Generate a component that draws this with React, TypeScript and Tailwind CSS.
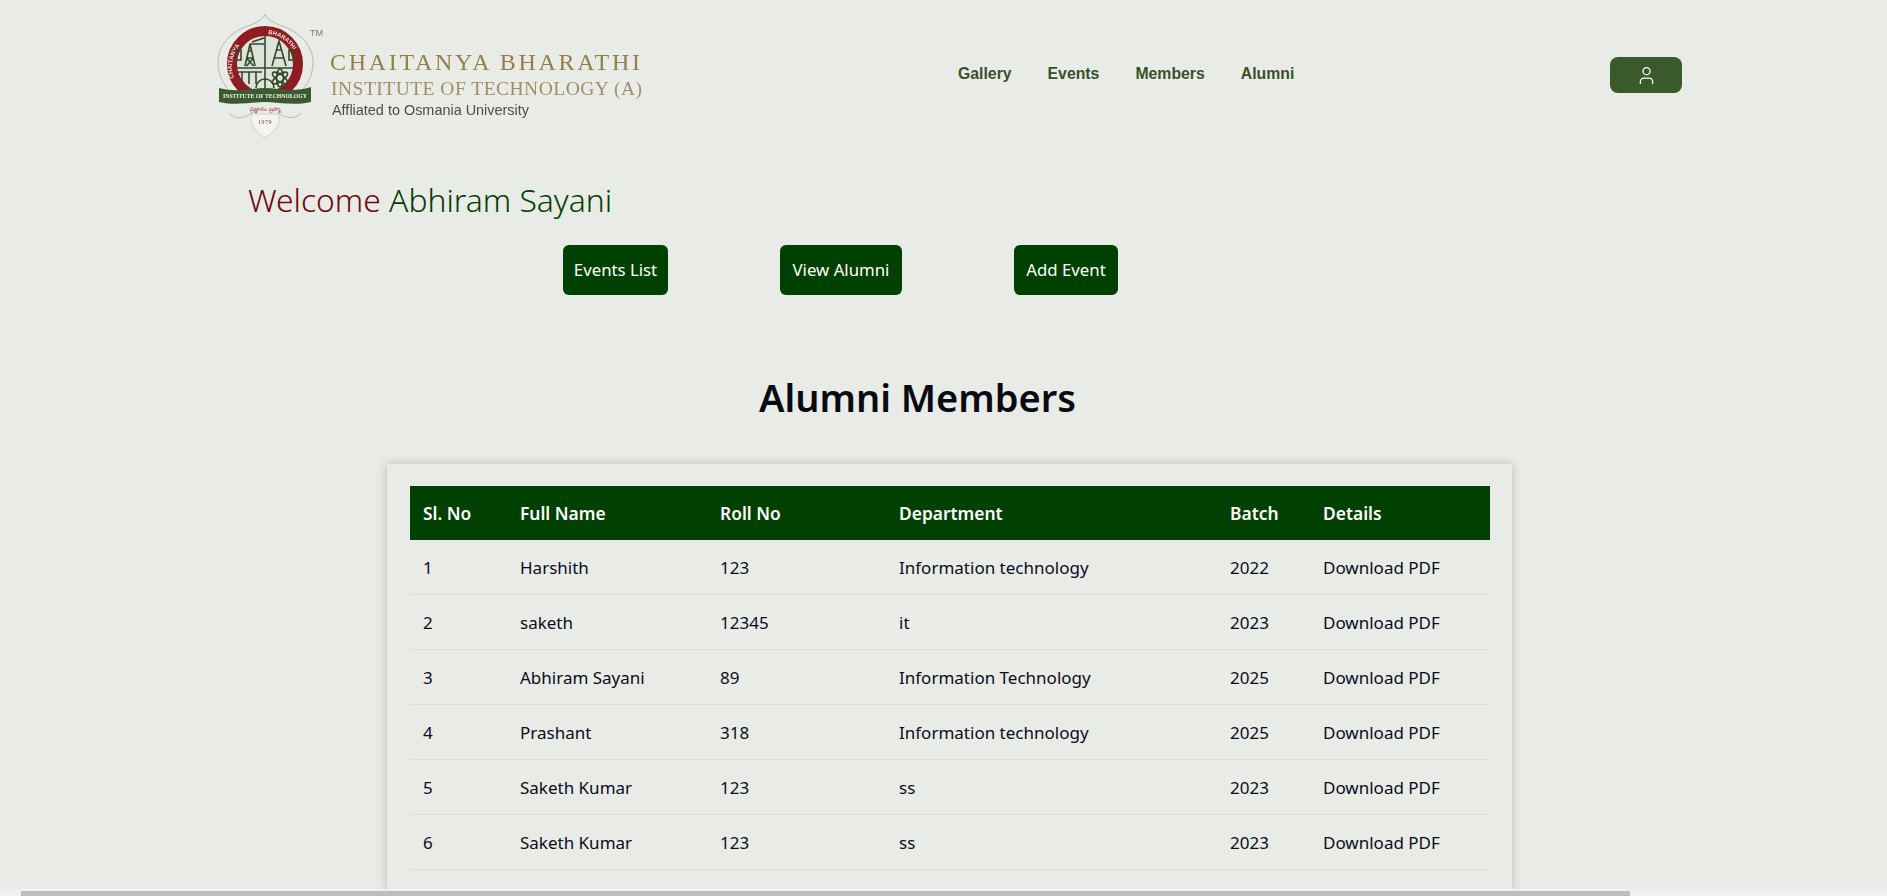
import React from 'react';
import { User } from 'lucide-react';

const alumni = [
  { id: 1, name: 'Harshith', roll: '123', dept: 'Information technology', batch: '2022' },
  { id: 2, name: 'saketh', roll: '12345', dept: 'it', batch: '2023' },
  { id: 3, name: 'Abhiram Sayani', roll: '89', dept: 'Information Technology', batch: '2025' },
  { id: 4, name: 'Prashant', roll: '318', dept: 'Information technology', batch: '2025' },
  { id: 5, name: 'Saketh Kumar', roll: '123', dept: 'ss', batch: '2023' },
  { id: 6, name: 'Saketh Kumar', roll: '123', dept: 'ss', batch: '2023' },
];

const Logo = () => (
  <svg viewBox="0 0 430 130" className="h-[130px] w-[430px] blur-[0.3px]">
    <defs>
      <path id="arcLeft" d="M18 68 A33 33 0 0 1 46 24" />
      <path id="arcRight" d="M52 24 A33 33 0 0 1 80 68" />
    </defs>
    {/* outer petal outline */}
    <path d="M49 4 C47 10 40 13 32 16 C14 22 2 36 2 52 C2 64 6 72 12 79" fill="none" stroke="#a9ada6" strokeWidth="0.8" />
    <path d="M49 4 C51 10 58 13 66 16 C84 22 97 36 97 52 C97 64 93 72 87 79" fill="none" stroke="#a9ada6" strokeWidth="0.8" />
    {/* ring */}
    <circle cx="49" cy="54" r="33" fill="#dfe2da" stroke="#8e1c22" strokeWidth="10" />
    <text fontSize="6" fontFamily="'Liberation Sans', sans-serif" fontWeight="700" fill="#efe6da">
      <textPath href="#arcLeft">CHAITANYA</textPath>
    </text>
    <text fontSize="6" fontFamily="'Liberation Sans', sans-serif" fontWeight="700" fill="#efe6da">
      <textPath href="#arcRight">BHARATHI</textPath>
    </text>
    {/* crest line art */}
    <g fill="none" stroke="#2f4a28" strokeWidth="1.6">
      <path d="M21 58 H77 M49 26 V78" />
      <path d="M29 56 L34 34 L39 56 M30.5 48 H37.5 M32 41 H36 M30.5 48 L37.5 56 M37.5 48 L30.5 56" />
      <path d="M36 32 L48 28 M34 34 L48 34" />
      <path d="M56 56 L63 31 L70 56 M58 48 H68 M60 40 H66" />
      <ellipse cx="64" cy="68" rx="9" ry="3.4" transform="rotate(35 64 68)" />
      <ellipse cx="64" cy="68" rx="9" ry="3.4" transform="rotate(-35 64 68)" />
      <ellipse cx="64" cy="68" rx="3.4" ry="9" />
      <path d="M22 62 H46 M26 62 V72 M33 62 V74 M40 62 V74" />
      <path d="M20 40 V50 H25 V40 Z M73 40 V50 H78 V40 Z" />
      <path d="M40 78 A9 9 0 0 1 58 78" />
    </g>
    {/* banner */}
    <path d="M3 78 C22 83 36 78 49 78 C62 78 76 83 95 77 L95 92 C78 96 62 92 49 92 C36 92 20 96 3 92 Z" fill="#3b5a2f" />
    <text x="49" y="87.5" textAnchor="middle" fontSize="5.6" textLength="84" lengthAdjust="spacingAndGlyphs" fontFamily="'Liberation Serif', serif" fontWeight="700" fill="#f1f1e8">
      INSTITUTE OF TECHNOLOGY
    </text>
    {/* lower shield */}
    <path d="M13 103 C20 111 30 107 36 103 M85 103 C78 111 68 107 62 103" fill="none" stroke="#a9ada6" strokeWidth="0.8" />
    <path d="M36 104 H62 C66 114 58 122 49 128 C40 122 32 114 36 104 Z" fill="#f4f4f0" stroke="#c2c4bd" strokeWidth="0.7" />
    <text x="49" y="101" textAnchor="middle" fontSize="5.5" fontFamily="'Noto Sans', sans-serif" fill="#9c2a33">
      ప్రజ్ఞానం బ్రహ్మ
    </text>
    <text x="49" y="114" textAnchor="middle" fontSize="6" letterSpacing="0.5" fontFamily="'Liberation Serif', serif" fill="#8c3038">
      1979
    </text>
    <text x="94" y="26" fontSize="9" fontFamily="'Liberation Sans', sans-serif" fill="#777b75">TM</text>
    {/* wordmark */}
    <text x="114" y="60" fontSize="24" textLength="310" lengthAdjust="spacing" fontFamily="'Liberation Serif', serif" fill="#947e48">
      CHAITANYA BHARATHI
    </text>
    <text x="115" y="85" fontSize="19.5" textLength="311" lengthAdjust="spacing" fontFamily="'Liberation Serif', serif" fill="#a08f66">
      INSTITUTE OF TECHNOLOGY (A)
    </text>
    <text x="116" y="105" fontSize="14.5" textLength="197" lengthAdjust="spacingAndGlyphs" fontFamily="'Liberation Sans', sans-serif" fill="#4b4d49">
      Affliated to Osmania University
    </text>
  </svg>
);

const App = () => {
  return (
    <div className="relative h-screen overflow-hidden bg-[#e9ebe6] font-['Noto_Sans',sans-serif] text-[#0b0b1e]">
      {/* Header */}
      <header className="flex h-[146px] items-start pl-[216px] pt-[10px]">
        <Logo />
        <nav className="ml-[312px] mt-[54px] flex w-[337px] gap-[36px] font-['Liberation_Sans',sans-serif] text-[15.8px] leading-[20px] font-bold text-[#38502a]">
          <a>Gallery</a>
          <a>Events</a>
          <a>Members</a>
          <a>Alumni</a>
        </nav>
        <button className="ml-[315px] mt-[47px] flex h-[36px] w-[72px] items-center justify-center rounded-[8px] bg-[#3a5a2c] text-white">
          <User size={21} strokeWidth={1.5} />
        </button>
      </header>

      {/* Welcome */}
      <h2 className="ml-[248px] mt-[34px] text-[31.8px] leading-[40px] font-light text-[#6e0a0a]">
        Welcome <span className="text-[#004000]">Abhiram Sayani</span>
      </h2>

      {/* Actions */}
      <div className="ml-[563px] mt-[25px] flex gap-[112px]">
        <button className="h-[50px] w-[105px] rounded-[6px] bg-[#004000] text-[16.8px] text-white">Events List</button>
        <button className="h-[50px] w-[122px] rounded-[6px] bg-[#004000] text-[16.8px] text-white">View Alumni</button>
        <button className="h-[50px] w-[104px] rounded-[6px] bg-[#004000] text-[16.8px] text-white">Add Event</button>
      </div>

      <h1 className="mt-[75px] pr-[52px] text-center text-[38px] leading-[54px] font-semibold text-[#0a0a14]">Alumni Members</h1>

      {/* Table card */}
      <div className="mt-[40px] ml-[387px] w-[1125px] bg-[#e9ebe6] py-[22px] pl-[23px] pr-[22px] shadow-[0_0_10px_rgba(0,0,0,0.2)]">
        <table className="w-[1080px] table-fixed border-separate border-spacing-0 text-left text-[17px]">
          <thead className="bg-[#004000] text-white">
            <tr className="h-[54px]">
              <th className="w-[97px] pl-[13px] text-[17.4px] font-semibold">Sl. No</th>
              <th className="w-[200px] pl-[13px] text-[17.4px] font-semibold">Full Name</th>
              <th className="w-[179px] pl-[13px] text-[17.4px] font-semibold">Roll No</th>
              <th className="w-[331px] pl-[13px] text-[17.4px] font-semibold">Department</th>
              <th className="w-[93px] pl-[13px] text-[17.4px] font-semibold">Batch</th>
              <th className="pl-[13px] text-[17.4px] font-semibold">Details</th>
            </tr>
          </thead>
          <tbody>
            {alumni.map((a) => (
              <tr key={a.id} className="h-[55px]">
                <td className="border-b border-[#dcdedb] pl-[13px] pt-[1px]">{a.id}</td>
                <td className="border-b border-[#dcdedb] pl-[13px] pt-[1px]">{a.name}</td>
                <td className="border-b border-[#dcdedb] pl-[13px] pt-[1px]">{a.roll}</td>
                <td className="border-b border-[#dcdedb] pl-[13px] pt-[1px]">{a.dept}</td>
                <td className="border-b border-[#dcdedb] pl-[13px] pt-[1px]">{a.batch}</td>
                <td className="border-b border-[#dcdedb] pl-[13px] pt-[1px]">Download PDF</td>
              </tr>
            ))}
          </tbody>
        </table>
      </div>

      {/* Horizontal scrollbar */}
      <div className="absolute right-0 bottom-0 left-0 h-[7px] bg-[#f0f0f0] pl-[21px] pt-[2px]">
        <div className="h-[5px] w-[1609px] bg-[#bdbdbd]" />
      </div>
    </div>
  );
};

export default App;
